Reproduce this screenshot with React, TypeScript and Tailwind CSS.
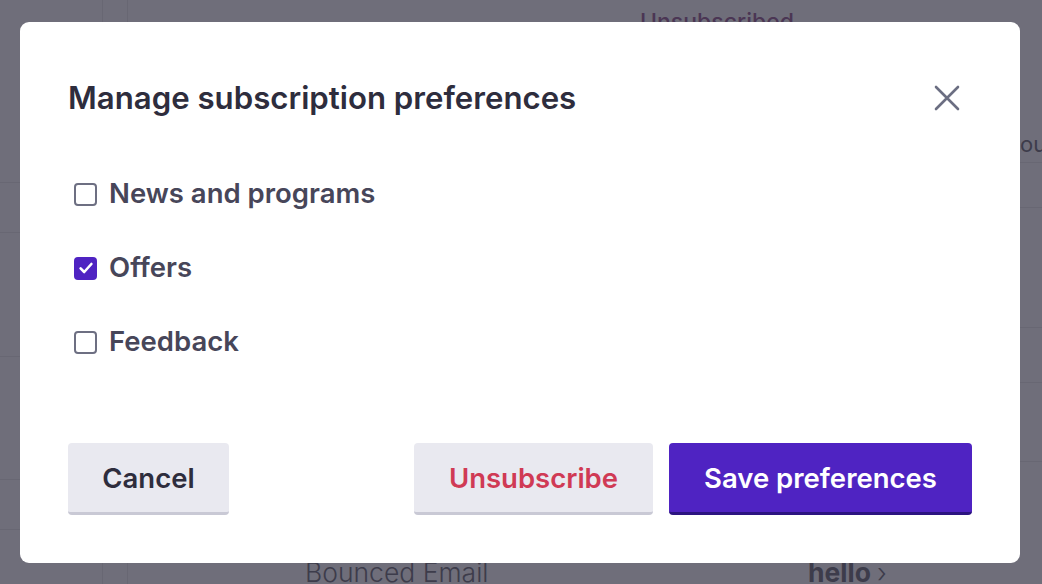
import React, { useState } from "react";

const font = { fontFamily: "Inter, 'Noto Sans', 'Liberation Sans', sans-serif" };

function Check({ checked, onClick }: { checked: boolean; onClick: () => void }) {
  return checked ? (
    <button
      onClick={onClick}
      className="flex h-[23px] w-[23px] shrink-0 items-center justify-center rounded-[4px] bg-[#4f23c2]"
    >
      <svg width="18" height="18" viewBox="0 0 18 18" fill="none">
        <path d="M3.6 9.4 L7.2 13 L14.4 5" stroke="white" strokeWidth="2.6" strokeLinecap="round" strokeLinejoin="round" />
      </svg>
    </button>
  ) : (
    <button
      onClick={onClick}
      className="h-[23px] w-[23px] shrink-0 rounded-[4px] border-2 border-[#6d6f82] bg-white"
    />
  );
}

export default function App() {
  const [prefs, setPrefs] = useState([
    { label: "News and programs", on: false },
    { label: "Offers", on: true },
    { label: "Feedback", on: false },
  ]);
  const toggle = (i: number) =>
    setPrefs((p) => p.map((x, j) => (j === i ? { ...x, on: !x.on } : x)));

  return (
    <div className="relative h-[584px] w-[1042px] overflow-hidden bg-[#6f6e7a]" style={font}>
      {/* underlying page (dimmed) */}
      <div className="flex h-full w-full">
        <div className="flex w-[103px] flex-col border-r border-[#686773]">
          <div className="h-[183px] border-b border-[#686773]" />
          <div className="h-[50px] border-b border-[#686773]" />
          <div className="h-[124px] border-b border-[#686773]" />
          <div className="h-[123px] border-b border-[#686773]" />
          <div className="h-[50px] border-b border-[#686773]" />
        </div>
        <div className="w-[25px] border-r border-[#686773]" />
        <div className="flex flex-1 flex-col">
          <div className="flex h-[40px] pl-[512px] pt-[5px] text-[23px] font-medium text-[#4b3654]">Unsubscribed</div>
          <div className="flex-1" />
          <div className="flex h-[34px] items-start pl-[177px] pt-[6px] text-[26.5px] font-light leading-[32px] text-[#3d3c4b]">
            <span className="w-[503px]">Bounced Email</span>
            <span className="font-bold">hello</span>
            <span className="ml-[6px]">›</span>
          </div>
        </div>
        <div className="flex w-[22px] flex-col overflow-hidden">
          <div className="h-[128px]" />
          <div className="h-[35px] whitespace-nowrap border-b border-[#686773] text-[22px] text-[#3d3c4b]">ou</div>
          <div className="h-[45px] border-b border-[#686773]" />
          <div className="h-[120px] border-b border-[#686773]" />
          <div className="h-[55px] border-b border-[#686773]" />
          <div className="h-[79px] border-b border-[#686773]" />
        </div>
      </div>

      {/* modal overlay */}
      <div className="absolute inset-0 flex items-center justify-center">
        <div className="-ml-[2px] flex h-[541px] w-[1000px] flex-col rounded-[9px] bg-white px-[48px] pb-[48px] pt-[56px]">
          <div className="flex items-center justify-between">
            <h1 className="text-[31.2px] font-semibold leading-[40px] text-[#2e2d3d]">
              Manage subscription preferences
            </h1>
            <button className="mr-[10px] flex h-[30px] w-[30px] items-center justify-center">
              <svg width="26" height="26" viewBox="0 0 26 26" fill="none">
                <path d="M2 2 L24 24 M24 2 L2 24" stroke="#6b6e82" strokeWidth="2.6" strokeLinecap="round" />
              </svg>
            </button>
          </div>

          <div className="mt-[60px] flex flex-col gap-[41px] pl-[6px]">
            {prefs.map((p, i) => (
              <label key={p.label} className="flex h-[33px] items-center gap-[12px]">
                <Check checked={p.on} onClick={() => toggle(i)} />
                <span className="text-[27.5px] font-semibold text-[#474659]">{p.label}</span>
              </label>
            ))}
          </div>

          <div className="mt-auto flex items-center">
            <button className="h-[72px] w-[161px] rounded-[4px] border-b-[3px] border-[#c9c9d5] bg-[#e9e9f0] pt-[3px] text-[27.5px] font-semibold text-[#2e2d3d]">
              Cancel
            </button>
            <div className="flex-1" />
            <button className="h-[72px] w-[239px] rounded-[4px] border-b-[3px] border-[#c9c9d5] bg-[#e9e9f0] pt-[3px] text-[27.5px] font-semibold text-[#d03a55]">
              Unsubscribe
            </button>
            <button className="ml-[16px] h-[72px] w-[303px] rounded-[4px] border-b-[3px] border-[#2c1480] bg-[#4f23c2] pt-[3px] text-[27.5px] font-semibold text-white">
              Save preferences
            </button>
          </div>
        </div>
      </div>
    </div>
  );
}
